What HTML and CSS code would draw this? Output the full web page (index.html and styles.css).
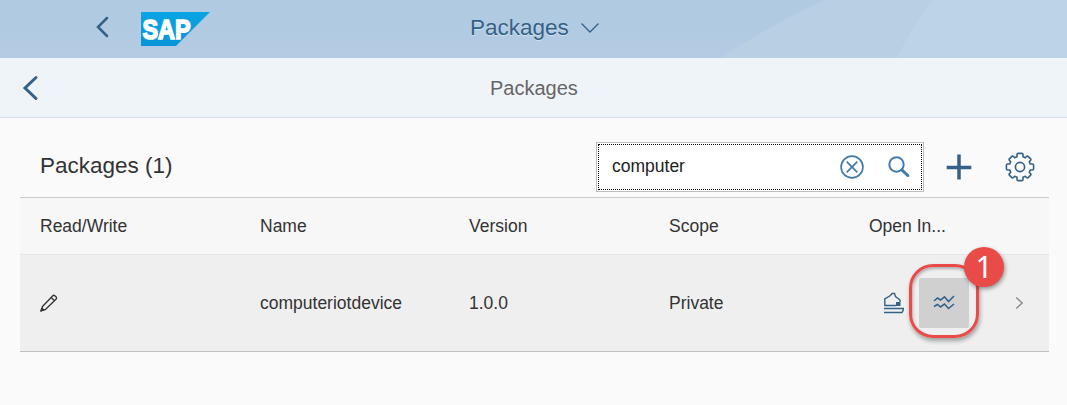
FILE: index.html
```html
<!DOCTYPE html>
<html lang="en">
<head>
<meta charset="utf-8">
<title>Packages</title>
<link rel="stylesheet" href="styles.css">
</head>
<body>
<header class="shell">
  <svg class="shell-art" width="347" height="58" viewBox="0 0 347 58">
    <path class="art-mid" d="M0 58 Q52 24 104 0 H347 V58Z"/>
    <path class="art-light" d="M176 58 Q193 27 213 0 H347 V58Z"/>
  </svg>
  <div class="shell-start">
    <svg class="shell-back" width="14" height="22" viewBox="0 0 14 22"><path d="M12 2 3 11 12 20"/></svg>
    <svg class="logo" width="69" height="34" viewBox="0 0 69 34">
      <defs><linearGradient id="sap" x1="0" y1="0" x2="0" y2="1"><stop offset="0" stop-color="#0aa5e4"/><stop offset="1" stop-color="#0a94d8"/></linearGradient></defs>
      <path d="M0 0H69L35 34H0Z" fill="url(#sap)"/>
      <text x="1.500" y="27" textLength="48" lengthAdjust="spacingAndGlyphs">SAP</text>
    </svg>
  </div>
  <div class="shell-title"><span>Packages</span>
    <svg width="20" height="12" viewBox="0 0 20 12"><path d="M1.500 1.500 10 10 18.500 1.500"/></svg>
  </div>
</header>
<nav class="page-bar">
  <svg class="page-back" width="17" height="28" viewBox="0 0 17 28"><path d="M14 3.500 3 14 14 24.500"/></svg>
  <h1>Packages</h1>
</nav>
<main>
  <div class="toolbar">
    <h2>Packages (1)</h2>
    <div class="search"><div class="search-focus">
      <input type="text" value="computer" aria-label="Search">
      <svg class="clear" width="24" height="24" viewBox="0 0 24 24"><circle cx="12" cy="12" r="10.900"/><path d="M6.700 6.700 17.300 17.300M17.300 6.700 6.700 17.300"/></svg>
      <svg class="find" width="22" height="22" viewBox="0 0 22 22"><circle cx="8.500" cy="8.500" r="7.200"/><path d="M13.800 13.800 19.800 19.500"/></svg>
    </div></div>
    <svg class="add" width="26" height="26" viewBox="0 0 26 26"><path d="M13 .5V25.500M.7 13.500H25.300"/></svg>
    <svg class="gear" width="30" height="30" viewBox="0 0 30 30"><path d="M12 4.800V2.600Q12 1.400 13.200 1.400H16.800Q18 1.400 18 2.600V4.800L20.300 5.700 21.600 4.500Q22.500 3.700 23.400 4.600L25.400 6.600Q26.300 7.500 25.500 8.400L24.300 9.700 25.200 12H27.400Q28.600 12 28.600 13.200V16.800Q28.600 18 27.400 18H25.200L24.300 20.300 25.500 21.600Q26.300 22.500 25.400 23.400L23.400 25.400Q22.500 26.300 21.600 25.500L20.300 24.300 18 25.200V27.400Q18 28.600 16.800 28.600H13.200Q12 28.600 12 27.400V25.200L9.700 24.300 8.400 25.500Q7.500 26.300 6.600 25.400L4.600 23.400Q3.700 22.500 4.500 21.600L5.700 20.300 4.800 18H2.600Q1.400 18 1.400 16.800V13.200Q1.400 12 2.600 12H4.800L5.700 9.700 4.500 8.400Q3.700 7.500 4.600 6.600L6.600 4.600Q7.500 3.700 8.400 4.500L9.700 5.700Z"/><circle cx="15" cy="15" r="4.600"/></svg>
  </div>
  <div class="table">
    <div class="row head"><span>Read/Write</span><span>Name</span><span>Version</span><span>Scope</span><span>Open In...</span></div>
    <div class="row item">
      <span><svg class="pencil" width="18" height="20" viewBox="0 0 18 20"><path d="M1 18 2.500 13.500 12.800 2.700Q13.800 1.800 14.800 2.700L16.200 4Q17 5 16.200 6L5.700 16.300ZM11.200 4.500 14.500 7.700"/><path class="tip" d="M1 18 1.900 15.300 3.800 17Z"/></svg></span>
      <span>computeriotdevice</span><span>1.0.0</span><span>Private</span>
      <div class="actions">
        <svg class="machine" width="22" height="22" viewBox="0 0 22 22"><path d="M5.500 13.500H1.800V7L7.500 3.500 9 1.500H11.500L12.500 4.500 17 8V10M5.500 13.500H13M1 16.500H20.300V18L19 20.500H1"/><path class="block" d="M13 10h4.500v4H13z"/></svg>
        <div class="wave-button">
          <svg width="22" height="16" viewBox="0 0 22 16"><path d="M1 6 4.500 3 7.500 5 11.500 1.800 15.500 6.500 21 1M1 11.500 4.500 9.500 7.500 12 11.500 9 15.500 13.500 21 9"/></svg>
          <div class="callout"></div><div class="badge">1</div>
        </div>
        <svg class="go" width="9" height="14" viewBox="0 0 9 14"><path d="M1.200 1.500 7.200 7 1.200 12.500"/></svg>
      </div>
    </div>
  </div>
</main>
</body>
</html>
```
FILE: styles.css
```css
* { box-sizing: border-box; }
body { margin: 0; height: 405px; overflow: hidden; background: #fafafa; color: #333; font: 17.5px "Liberation Sans", Arial, sans-serif; }
svg { display: block; flex: none; fill: none; stroke: #346187; }
h1, h2 { margin: 0; font-weight: 400; }

.shell { position: relative; display: grid; grid-template-columns: 470px 1fr; height: 58px; background: linear-gradient(#afcae1, #b3cbe3); }
.shell-art { position: absolute; right: 0; top: 0; stroke: none; }
.art-mid { fill: #b8cfe4; }
.art-light { fill: #bdd3e8; }
.shell-start { display: flex; align-items: flex-start; padding: 12px 0 0 95px; }
.shell-back { margin-top: 4px; stroke-width: 2.5; stroke-linecap: round; }
.logo { margin-left: 32px; stroke: none; }
.logo text { font: bold 28px "Liberation Sans", Arial, sans-serif; fill: #fff; stroke: #fff; stroke-width: 1.7; }
.shell-title { display: flex; align-items: center; gap: 11px; padding-bottom: 3px; color: #346187; font-size: 22.5px; text-shadow: 0 1px 1px #d4e3f0; }
.shell-title svg { stroke-width: 1.3; }

.page-bar { display: grid; grid-template-columns: 468px 1fr; align-items: center; height: 60px; padding-left: 22px; background: #eff4f9; border-bottom: 1px solid #d3e0eb; }
.page-back { stroke-width: 3; stroke-linecap: round; }
.page-bar h1 { padding-top: 2px; color: #666; font-size: 20px; }

main { padding: 24px 18px 0 20px; }
.toolbar { display: flex; align-items: center; height: 50px; padding-left: 20px; }
.toolbar h2 { flex: 1; font-size: 22.5px; padding-bottom: 2px; }
.search { width: 328px; height: 50px; padding: 1px; background: #fff; border: 1px solid #bfbfbf; }
.search-focus { display: flex; align-items: center; height: 46px; padding-left: 13px; border: 1px dotted #000; }
.search input { width: 228px; height: 42px; padding: 0 0 2px; border: 0; outline: 0; background: none; color: #222; font: 17.5px "Liberation Sans", Arial, sans-serif; }
.clear, .find { stroke: #427cac; stroke-width: 1.7; }
.find { margin-left: 24px; stroke-width: 2; }
.find path { stroke-width: 3; stroke-linecap: round; }
.add { margin-left: 22px; stroke-width: 3.5; }
.gear { margin: 0 14px 0 33px; stroke-width: 1.6; stroke-linejoin: round; }

.table { margin-top: 5px; width: 1029px; border-top: 1px solid #ccc; border-bottom: 1px solid #bfbfbf; }
.row { display: grid; grid-template-columns: 220px 209px 200px 200px 180px; align-items: center; padding-left: 20px; }
.head { height: 57px; background: #f7f7f7; border-bottom: 1px solid #e5e5e5; }
.item { height: 96px; background: #efefef; }
.pencil { stroke: #333; stroke-width: 1.3; stroke-linejoin: round; }
.pencil .tip { fill: #333; }
.actions { display: flex; align-items: center; padding-left: 14px; }
.machine { stroke-width: 1.4; }
.machine .block { fill: #346187; stroke: none; }
.wave-button { position: relative; display: grid; place-items: center; width: 50px; height: 50px; margin-left: 14px; background: #d0d0d0; border-radius: 2px; }
.wave-button svg { stroke-width: 1.6; }
.callout { position: absolute; left: -10px; top: -14px; width: 70px; height: 74px; border: 3px solid #e94b48; border-radius: 24px; box-shadow: 1px 3px 4px #0005, inset 1px 2px 3px #0004; }
.badge { position: absolute; left: 45px; top: -31px; width: 40px; height: 40px; border-radius: 50%; background: #e94b48; box-shadow: 1px 2px 4px #0006; color: #fff; font: 30px/40px "Noto Sans", sans-serif; text-align: center; }
.go { margin-left: 46px; stroke: #888; stroke-width: 1.4; }
```
